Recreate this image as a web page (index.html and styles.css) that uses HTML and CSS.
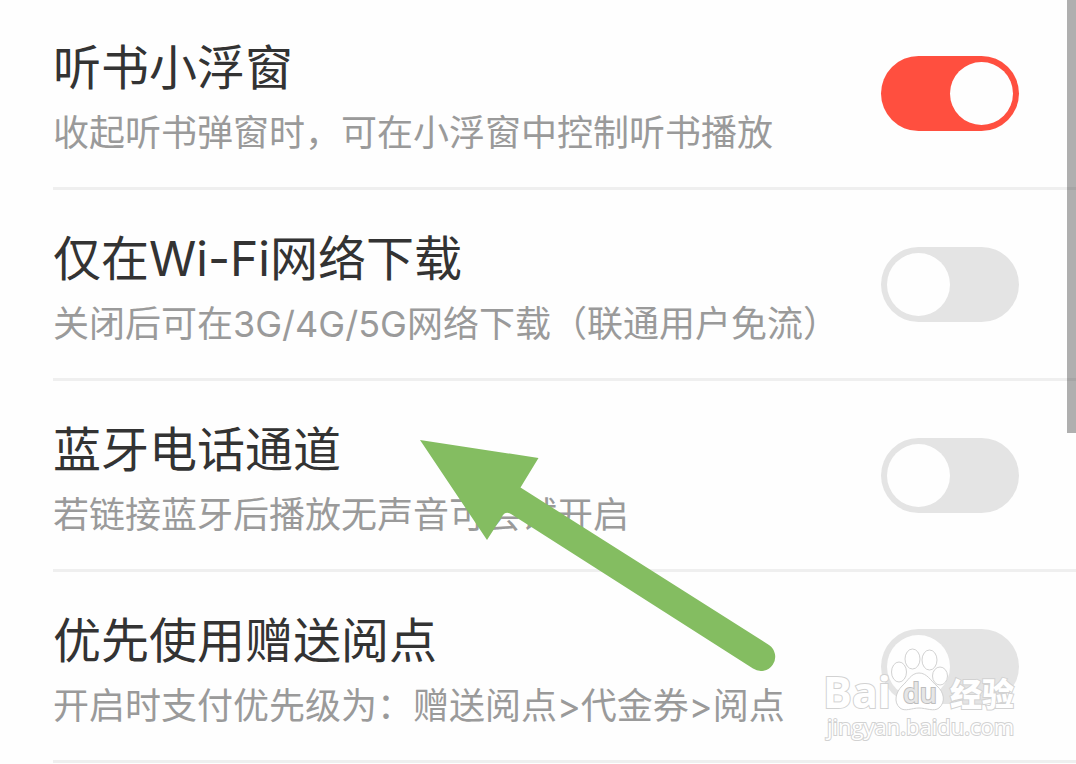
FILE: index.html
```html
<!DOCTYPE html>
<html lang="zh-CN">
<head>
<meta charset="utf-8">
<meta name="viewport" content="width=device-width, initial-scale=1">
<title>听书设置</title>
<link rel="stylesheet" href="styles.css">
</head>
<body>
<main class="settings">
  <div class="row">
    <label class="text" for="float-window">
      <span class="title">听书小浮窗</span>
      <span class="hint">收起听书弹窗时，可在小浮窗中控制听书播放</span>
    </label>
    <input class="switch" id="float-window" type="checkbox" role="switch" checked>
  </div>
  <div class="row">
    <label class="text" for="wifi-only">
      <span class="title">仅在Wi-Fi网络下载</span>
      <span class="hint">关闭后可在3G/4G/5G网络下载（联通用户免流）</span>
    </label>
    <input class="switch" id="wifi-only" type="checkbox" role="switch">
  </div>
  <div class="row">
    <label class="text" for="bluetooth">
      <span class="title">蓝牙电话通道</span>
      <span class="hint">若链接蓝牙后播放无声音可尝试开启</span>
    </label>
    <input class="switch" id="bluetooth" type="checkbox" role="switch">
  </div>
  <div class="row">
    <label class="text" for="gift-points">
      <span class="title">优先使用赠送阅点</span>
      <span class="hint">开启时支付优先级为：赠送阅点&gt;代金券&gt;阅点</span>
    </label>
    <input class="switch" id="gift-points" type="checkbox" role="switch">
  </div>
</main>
<div class="scrollbar"></div>
<svg class="arrow" width="360" height="236" viewBox="420 438 360 236" aria-hidden="true">
  <path d="M420 440 L538.500 458 L520.500 487.500 L769 645 A14 14 0 0 1 753 668.500 L511 514 Q506 511 503 515 L487 540 Z"/>
</svg>
<svg class="watermark" width="204" height="104" viewBox="820 644 204 104" role="img" aria-label="Baidu 经验">
  <text class="brand" x="823" y="708">Bai</text>
  <g class="paw">
    <ellipse cx="899" cy="672" rx="7.500" ry="10"/>
    <ellipse cx="912.500" cy="659" rx="7.500" ry="10"/>
    <ellipse cx="929.500" cy="660" rx="7.500" ry="10"/>
    <ellipse cx="940" cy="676" rx="7.500" ry="9"/>
    <path d="M919 673 C927 673 931 681 937 686 C944 692 946 702 939 708 C934 712 926 708 919 708 C912 708 905 712 900 708 C893 702 896 692 902 686 C908 681 911 673 919 673 Z"/>
  </g>
  <text class="du" x="903" y="703">du</text>
  <text class="cn" x="950" y="706">经验</text>
  <text class="site" x="827" y="735">jingyan.baidu.com</text>
</svg>
</body>
</html>
```
FILE: styles.css
```css
* { box-sizing: border-box; }
body {
  margin: 0;
  position: relative;
  background: #fefefe;
  font-family: Inter, "Noto Sans CJK SC", sans-serif;
  overflow: hidden;
}
.settings { padding-left: 53px; }
.row {
  display: flex;
  align-items: center;
  justify-content: space-between;
  padding-right: 57px;
  border-bottom: 3px solid #efefef;
}
.text {
  display: flex;
  flex-direction: column;
  gap: 13px;
  padding: 39px 0 32px;
}
.row:first-child .text { padding-top: 38px; }
.title {
  font-size: 48px;
  line-height: 60px;
  color: #333;
}
.hint {
  font-size: 36px;
  line-height: 44px;
  color: #9a9a9a;
}
.switch {
  appearance: none;
  flex: none;
  display: flex;
  width: 138px;
  height: 75px;
  margin: 0;
  padding: 6px;
  border-radius: 38px;
  background: #e4e4e4;
}
.switch::before {
  content: "";
  width: 63px;
  height: 63px;
  border-radius: 50%;
  background: #fefefe;
}
.switch:checked {
  justify-content: flex-end;
  background: #ff4f3f;
}
.scrollbar {
  position: absolute;
  top: 0;
  right: 0;
  width: 9px;
  height: 433px;
  background: rgba(0, 0, 0, 0.31);
}
.arrow {
  position: absolute;
  left: 420px;
  top: 438px;
  fill: #84bd61;
}
.watermark {
  position: absolute;
  left: 820px;
  top: 644px;
  fill: #fff;
  stroke: #d2d2d2;
  stroke-width: 1;
}
.watermark text { paint-order: stroke; stroke-width: 2; }
.brand { font: 700 43px "Open Sans", sans-serif; }
.watermark .du { font: 600 27px "Open Sans", sans-serif; fill: #e6e6e6; stroke: #bdbdbd; }
.cn { font: 900 32px "Noto Sans CJK SC", sans-serif; }
.site { font: 400 22px "Open Sans", sans-serif; }
```
